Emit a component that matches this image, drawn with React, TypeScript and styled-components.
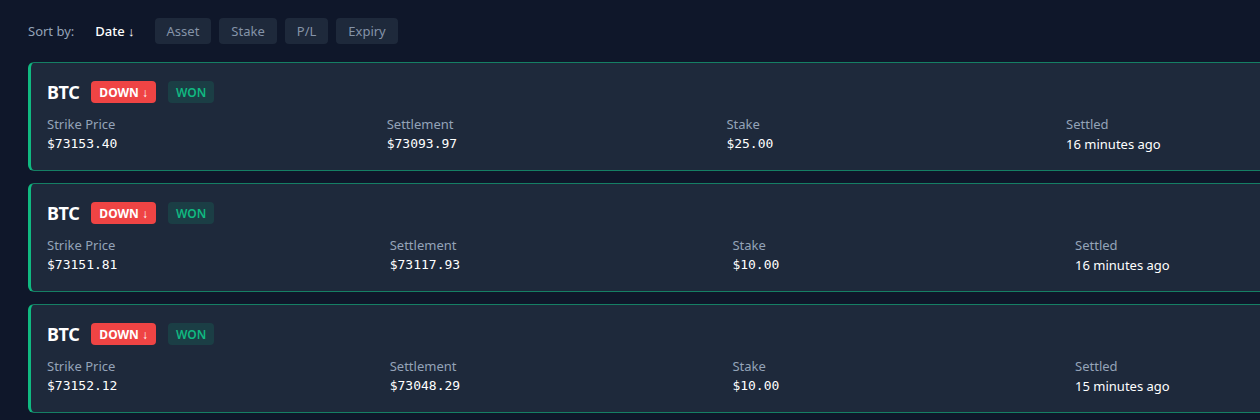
import React from 'react';
import styled, { createGlobalStyle } from 'styled-components';

const GlobalStyle = createGlobalStyle`
  html, body {
    margin: 0;
    background: #0f172a;
    overflow: hidden;
  }
  body {
    font-family: 'Noto Sans', 'Open Sans', sans-serif;
    color: #f1f5f9;
  }
`;

const Page = styled.div`
  width: 1500px;
  padding: 18px 0 0 28px;
  box-sizing: border-box;
`;

const SortBar = styled.div`
  display: flex;
  align-items: center;
  gap: 8px;
  height: 26px;
`;

const SortLabel = styled.span`
  font-size: 13px;
  color: #94a3b8;
  margin-right: 1px;
`;

const SortButton = styled.button<{ $active?: boolean }>`
  height: 26px;
  padding: 0 12px;
  border: none;
  border-radius: 4px;
  font-family: inherit;
  font-size: 13px;
  font-weight: ${(p) => (p.$active ? 500 : 400)};
  color: ${(p) => (p.$active ? '#ffffff' : '#8593a8')};
  background: ${(p) => (p.$active ? 'transparent' : '#1e293b')};
  cursor: pointer;
`;

const List = styled.div`
  display: flex;
  flex-direction: column;
  gap: 12px;
  margin-top: 18px;
`;

const Card = styled.div`
  background: #1e293b;
  border: 1px solid rgba(16, 185, 129, 0.6);
  border-left: 3px solid #10b981;
  border-radius: 6px;
  padding: 16px 16px 16px;
`;

const TitleRow = styled.div`
  display: flex;
  align-items: center;
  height: 26px;
`;

const Asset = styled.span`
  font-size: 18px;
  font-weight: 700;
  color: #ffffff;
  margin-right: 12px;
  letter-spacing: -0.4px;
`;

const Badge = styled.span<{ $tone: 'down' | 'won' }>`
  display: inline-flex;
  align-items: center;
  height: 22px;
  padding: 0 8px;
  border-radius: 4px;
  font-size: 12px;
  font-weight: ${(p) => (p.$tone === 'down' ? 700 : 600)};
  color: ${(p) => (p.$tone === 'down' ? '#ffffff' : '#10b981')};
  background: ${(p) => (p.$tone === 'down' ? '#ef4444' : 'rgba(16, 185, 129, 0.15)')};
  margin-right: 12px;
`;

const Stats = styled.div<{ $col: number }>`
  display: grid;
  grid-template-columns: repeat(4, ${(p) => p.$col}px);
  margin-top: 9px;
`;

const Stat = styled.div`
  display: flex;
  flex-direction: column;
`;

const Label = styled.span`
  font-size: 13px;
  line-height: 20px;
  color: #94a3b8;
`;

const MonoValue = styled.span`
  font-family: 'DejaVu Sans Mono', 'Liberation Mono', monospace;
  font-size: 13px;
  font-weight: 400;
  line-height: 20px;
  color: #ffffff;
`;

const TextValue = styled.span`
  font-size: 13px;
  font-weight: 400;
  line-height: 20px;
  color: #ffffff;
`;

interface Trade {
  strike: string;
  settlement: string;
  stake: string;
  settled: string;
  col: number;
}

const trades: Trade[] = [
  { strike: '$73153.40', settlement: '$73093.97', stake: '$25.00', settled: '16 minutes ago', col: 339.7 },
  { strike: '$73151.81', settlement: '$73117.93', stake: '$10.00', settled: '16 minutes ago', col: 342.7 },
  { strike: '$73152.12', settlement: '$73048.29', stake: '$10.00', settled: '15 minutes ago', col: 342.7 },
];

function TradeCard({ trade }: { trade: Trade }) {
  return (
    <Card>
      <TitleRow>
        <Asset>BTC</Asset>
        <Badge $tone="down">DOWN ↓</Badge>
        <Badge $tone="won">WON</Badge>
      </TitleRow>
      <Stats $col={trade.col}>
        <Stat>
          <Label>Strike Price</Label>
          <MonoValue>{trade.strike}</MonoValue>
        </Stat>
        <Stat>
          <Label>Settlement</Label>
          <MonoValue>{trade.settlement}</MonoValue>
        </Stat>
        <Stat>
          <Label>Stake</Label>
          <MonoValue>{trade.stake}</MonoValue>
        </Stat>
        <Stat>
          <Label>Settled</Label>
          <TextValue>{trade.settled}</TextValue>
        </Stat>
      </Stats>
    </Card>
  );
}

export default function App() {
  return (
    <>
      <GlobalStyle />
      <Page>
        <SortBar>
          <SortLabel>Sort by:</SortLabel>
          <SortButton $active>Date ↓</SortButton>
          <SortButton>Asset</SortButton>
          <SortButton>Stake</SortButton>
          <SortButton>P/L</SortButton>
          <SortButton>Expiry</SortButton>
        </SortBar>
        <List>
          {trades.map((t, i) => (
            <TradeCard key={i} trade={t} />
          ))}
        </List>
      </Page>
    </>
  );
}
